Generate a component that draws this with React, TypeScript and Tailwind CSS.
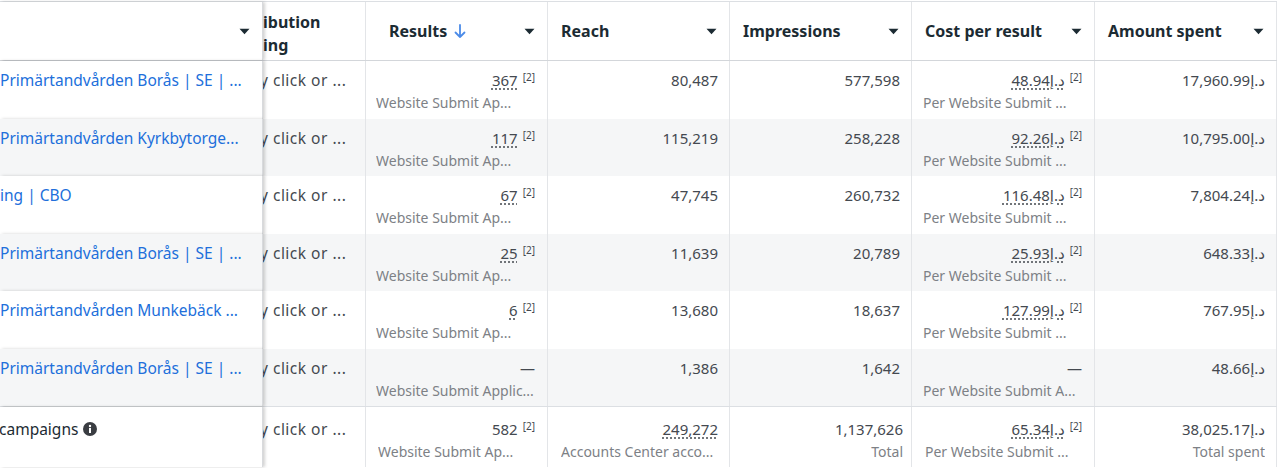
import React from 'react';

const AED = 'د.إ';

type Row = {
  name: string;
  results: string;
  resultsSub: string;
  reach: string;
  impressions: string;
  cost: string;
  costSub: string;
  spent: string;
};

const rows: Row[] = [
  { name: 'Primärtandvården Borås | SE | ...', results: '367', resultsSub: 'Website Submit Ap...', reach: '80,487', impressions: '577,598', cost: '48.94', costSub: 'Per Website Submit ...', spent: '17,960.99' },
  { name: 'Primärtandvården Kyrkbytorge...', results: '117', resultsSub: 'Website Submit Ap...', reach: '115,219', impressions: '258,228', cost: '92.26', costSub: 'Per Website Submit ...', spent: '10,795.00' },
  { name: 'ing | CBO', results: '67', resultsSub: 'Website Submit Ap...', reach: '47,745', impressions: '260,732', cost: '116.48', costSub: 'Per Website Submit ...', spent: '7,804.24' },
  { name: 'Primärtandvården Borås | SE | ...', results: '25', resultsSub: 'Website Submit Ap...', reach: '11,639', impressions: '20,789', cost: '25.93', costSub: 'Per Website Submit ...', spent: '648.33' },
  { name: 'Primärtandvården Munkebäck ...', results: '6', resultsSub: 'Website Submit Ap...', reach: '13,680', impressions: '18,637', cost: '127.99', costSub: 'Per Website Submit ...', spent: '767.95' },
  { name: 'Primärtandvården Borås | SE | ...', results: '—', resultsSub: 'Website Submit Applic...', reach: '1,386', impressions: '1,642', cost: '—', costSub: 'Per Website Submit A...', spent: '48.66' },
];

function Caret() {
  return (
    <svg width="11" height="7" viewBox="0 0 11 7" className="shrink-0">
      <path d="M0.5 0.8 H10.5 L5.5 6.2 Z" fill="#1c2b33" />
    </svg>
  );
}

function SortArrow() {
  return (
    <svg width="12" height="15" viewBox="0 0 12 15" className="ml-[7px]">
      <path d="M6 1 V13 M1.5 8.5 L6 13 L10.5 8.5" stroke="#4b8be8" strokeWidth="1.8" fill="none" strokeLinecap="round" strokeLinejoin="round" />
    </svg>
  );
}

function InfoIcon() {
  return (
    <svg width="14" height="14" viewBox="0 0 14 14" className="ml-[5px] inline-block align-[-1px]">
      <circle cx="7" cy="7" r="7" fill="#3a3d42" />
      <rect x="6" y="6" width="2" height="5" fill="#fff" />
      <circle cx="7" cy="4" r="1.2" fill="#fff" />
    </svg>
  );
}

function Sup() {
  return <span className="ml-[5px] text-[10px] leading-none align-[5px] text-[#444950]">[2]</span>;
}

function Num({ value, dotted, sup }: { value: string; dotted?: boolean; sup?: boolean }) {
  return (
    <div className="leading-[20px] whitespace-nowrap text-right">
      <bdi dir="ltr" className={dotted ? 'underline decoration-dotted decoration-[#444950] underline-offset-[3px]' : ''}>
        {value}
      </bdi>
      {sup && <Sup />}
    </div>
  );
}

function Sub({ text, right }: { text: string; right?: boolean }) {
  return (
    <div className={`mt-[3px] text-[14px] leading-[20px] text-[#7d8186] whitespace-nowrap overflow-hidden ${right ? 'text-right' : 'text-left'}`}>
      {text}
    </div>
  );
}

const cell = 'border-r border-[#e3e5e8] overflow-hidden';
const frozen = 'w-[263px] whitespace-nowrap overflow-hidden relative z-10 shadow-[2px_0_3px_rgba(0,0,0,0.18)] border-r border-[#d8dadd]';

export default function App() {
  return (
    <div className="w-[1279px] h-[468px] overflow-hidden bg-white pt-px text-[15px] text-[#444950]" style={{ fontFamily: '"Noto Sans", "DejaVu Sans", sans-serif' }}>
      <div className="w-[1277px] border-t border-[#dcdfe3]">
        {/* header */}
        <div className="flex h-[59px] border-b border-[#d3d6da] text-[16px] font-bold text-[#1c2b33]">
          <div className={`${frozen} flex items-center justify-end pr-[12px] bg-white`}>
            <Caret />
          </div>
          <div className={`${cell} w-[103px] flex flex-col justify-center leading-[23px] pt-[5px] whitespace-nowrap`}>
            <span>ibution</span>
            <span>ing</span>
          </div>
          <div className={`${cell} w-[182px] flex items-center pl-[23px] pr-[12px]`}>
            <span>Results</span>
            <SortArrow />
            <span className="flex-1" />
            <Caret />
          </div>
          <div className={`${cell} w-[182px] flex items-center pl-[13px] pr-[12px]`}>
            <span>Reach</span>
            <span className="flex-1" />
            <Caret />
          </div>
          <div className={`${cell} w-[182px] flex items-center pl-[13px] pr-[12px]`}>
            <span>Impressions</span>
            <span className="flex-1" />
            <Caret />
          </div>
          <div className={`${cell} w-[183px] flex items-center pl-[13px] pr-[12px]`}>
            <span>Cost per result</span>
            <span className="flex-1" />
            <Caret />
          </div>
          <div className={`${cell} w-[182px] flex items-center pl-[13px] pr-[12px]`}>
            <span>Amount spent</span>
            <span className="flex-1" />
            <Caret />
          </div>
        </div>

        {/* rows */}
        {rows.map((r, i) => (
          <div key={i} className={`flex h-[57.5px] ${i % 2 === 1 ? 'bg-[#f5f6f7]' : 'bg-white'}`}>
            <div className={`${frozen} pt-[9px] leading-[20px] text-[15.5px] text-[#216fdb] ${i % 2 === 1 ? 'bg-[#f5f6f7]' : 'bg-white'}`}>
              {r.name}
            </div>
            <div className={`${cell} w-[103px] pt-[9px] leading-[20px] text-[15.5px] tracking-[0.5px] whitespace-nowrap`}>
              <span className="-ml-[3px]">y click or ...</span>
            </div>
            <div className={`${cell} w-[182px] pt-[9px] pl-[10px] pr-[12px]`}>
              <Num value={r.results} dotted={r.results !== '—'} sup={r.results !== '—'} />
              <Sub text={r.resultsSub} />
            </div>
            <div className={`${cell} w-[182px] pt-[9px] pr-[11px]`}>
              <Num value={r.reach} />
            </div>
            <div className={`${cell} w-[182px] pt-[9px] pr-[11px]`}>
              <Num value={r.impressions} />
            </div>
            <div className={`${cell} w-[183px] pt-[9px] pl-[11px] pr-[12px]`}>
              <Num value={r.cost === '—' ? '—' : r.cost + AED} dotted={r.cost !== '—'} sup={r.cost !== '—'} />
              <Sub text={r.costSub} />
            </div>
            <div className={`${cell} w-[182px] pt-[9px] pr-[11px]`}>
              <Num value={r.spent + AED} />
            </div>
          </div>
        ))}

        {/* totals */}
        <div className="flex h-[61px] border-t border-[#dcdfe3] bg-white">
          <div className={`${frozen} pt-[12px] leading-[20px] text-[15.5px] text-[#1c2b33] bg-white`}>
            <span className="-ml-[1px]">campaigns</span>
            <InfoIcon />
          </div>
          <div className={`${cell} w-[103px] pt-[12px] leading-[20px] text-[15.5px] tracking-[0.5px] whitespace-nowrap`}>
            <span className="-ml-[3px]">y click or ...</span>
          </div>
          <div className={`${cell} w-[182px] pt-[12px] pl-[12px] pr-[12px]`}>
            <Num value="582" sup />
            <Sub text="Website Submit Ap..." />
          </div>
          <div className={`${cell} w-[182px] pt-[12px] pl-[13px] pr-[11px]`}>
            <Num value="249,272" dotted />
            <Sub text="Accounts Center acco..." />
          </div>
          <div className={`${cell} w-[182px] pt-[12px] pr-[8px]`}>
            <Num value="1,137,626" />
            <Sub text="Total" right />
          </div>
          <div className={`${cell} w-[183px] pt-[12px] pl-[13px] pr-[12px]`}>
            <Num value={'65.34' + AED} dotted sup />
            <Sub text="Per Website Submit ..." />
          </div>
          <div className={`${cell} w-[182px] pt-[12px] pr-[11px]`}>
            <Num value={'38,025.17' + AED} />
            <Sub text="Total spent" right />
          </div>
        </div>
      </div>
    </div>
  );
}
